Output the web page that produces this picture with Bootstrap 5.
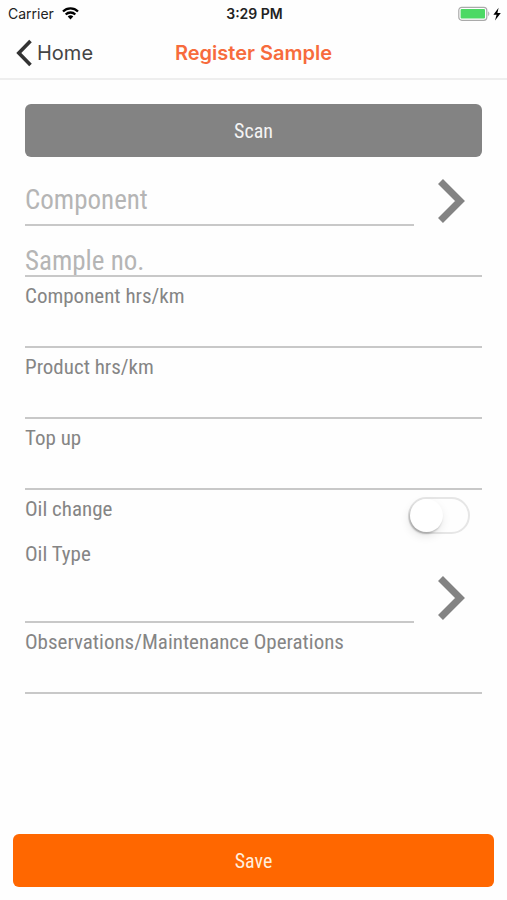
<!DOCTYPE html>
<html lang="en">
<head>
<meta charset="utf-8">
<meta name="viewport" content="width=device-width, initial-scale=1">
<title>Register Sample</title>
<link href="https://cdn.jsdelivr.net/npm/bootstrap@5.3.0/dist/css/bootstrap.min.css" rel="stylesheet">
<style>
  body { font-family: "Roboto Condensed", "Liberation Sans Narrow", Roboto, sans-serif; color: #858585; background: #fefefe; }
  .system-font { font-family: Inter, "Liberation Sans", sans-serif; }
  .status-bar { height: 27px; font-size: 14px; color: #222; padding: 0 6px 0 8px; }
  .side { flex: 1 1 0; }
  .title-bar { height: 53px; border-bottom: 2px solid #eee; padding: 0 16px; }
  .back-link { color: #444; font-size: 20px; }
  .page-title { color: #f76b3c; font-size: 20px; font-weight: 600; }
  .form-area { padding: 24px 25px 0; }
  .btn-block { height: 53px; border: 0; border-radius: 6px; font-size: 20px; color: #fff; }
  .btn-scan, .btn-scan:hover { background: #838383; color: #f4f4f4; }
  .btn-save, .btn-save:hover { background: #ff6700; color: #ffeedd; }
  .line-input { border: 0; border-bottom: 2px solid #c8c8c8; border-radius: 0; padding: 0; height: 37px; font-size: 27px; line-height: 30px; color: #858585; background: transparent; }
  .line-input:focus { box-shadow: none; border-color: #858585; background: transparent; }
  .line-input::placeholder { color: #b5b5b5; opacity: 1; }
  .input-tall { height: 50px; }
  .input-snug { height: 31px; }
  .component-row { padding-top: 19px; }
  .field-label { font-size: 21px; line-height: 30px; padding-top: 4px; }
  .pick-btn { width: 68px; height: 50px; padding: 0 0 0 8px; border: 0; }
  .oil-row { height: 45px; }
  .oil-switch.form-check-input { width: 62px; height: 37px; margin: 0; border: 2px solid #e6e6e6; background: #fefefe; box-shadow: none; appearance: none; border-radius: 19px; }
  .oil-switch::before { content: ""; display: block; width: 33px; height: 33px; border-radius: 50%; background: #fff; box-shadow: -1px 2px 2px rgba(0,0,0,.2), -1px 4px 10px rgba(0,0,0,.1); }
  .oil-switch:checked { background: #4cd964; }
  .oil-switch:checked::before { margin-left: auto; }
  .switch-cell { padding: 7px 12px 0 0; }
  .save-area { padding: 0 13px 13px; }
</style>
</head>
<body class="d-flex flex-column min-vh-100">
<header class="system-font">
  <div class="status-bar d-flex align-items-center">
    <div class="side d-flex align-items-center gap-2">
      <span>Carrier</span>
      <svg width="17" height="13" viewBox="0 0 17 13" fill="none" stroke="#000" stroke-width="2.3" role="img" aria-label="Wi-Fi"><path d="M1 4.5a10.8 10.8 0 0 1 15 0M3.7 7.5a6.8 6.8 0 0 1 9.6 0"/><path d="M8.5 12.5L5.7 9.6a4 4 0 0 1 5.6 0z" fill="#000" stroke="none"/></svg>
    </div>
    <span class="fw-semibold">3:29 PM</span>
    <div class="side d-flex align-items-center justify-content-end">
      <svg width="43" height="16" viewBox="0 0 43 16" role="img" aria-label="Battery charging"><rect x=".8" y="1.3" width="28" height="13" rx="3" fill="#fff" stroke="#aaa" stroke-width="1.2"/><rect x="2.6" y="3.1" width="24.4" height="9.4" rx="1" fill="#4cd964"/><path d="M30.2 5.3q2.4 2.5 0 5z" fill="#aaa"/><path d="M40.6 1.8L35.4 8.8h3.2L37 14.5l5.8-7.5h-3.4z" fill="#000"/></svg>
    </div>
  </div>
  <nav class="title-bar d-flex align-items-center" aria-label="Page">
    <div class="side d-flex"><a href="#" class="back-link d-flex align-items-center text-decoration-none"><svg class="me-1" width="17" height="28" viewBox="0 0 17 28" fill="none" stroke="#333" stroke-width="3.6" aria-hidden="true"><path d="M14.5 2L2.8 14l11.7 12"/></svg>Home</a></div>
    <h1 class="page-title m-0">Register Sample</h1>
    <div class="side"></div>
  </nav>
</header>
<form class="d-flex flex-column flex-grow-1">
  <div class="form-area">
    <button type="button" class="btn btn-block btn-scan w-100">Scan</button>
    <div class="component-row d-flex">
      <input class="form-control line-input input-tall" type="text" placeholder="Component" aria-label="Component">
      <button type="button" class="btn pick-btn flex-shrink-0" aria-label="Choose component"><svg width="30" height="46" viewBox="0 0 30 46" fill="none" stroke="#838383" stroke-width="7" aria-hidden="true"><path d="M3.5 3.5L23 23 3.5 42.5"/></svg></button>
    </div>
    <div class="pt-3 mt-1"><input class="form-control line-input input-snug" type="text" placeholder="Sample no." aria-label="Sample number"></div>
    <div>
      <label class="field-label d-block" for="component-hours">Component hrs/km</label>
      <input class="form-control line-input" type="text" id="component-hours">
    </div>
    <div>
      <label class="field-label d-block" for="product-hours">Product hrs/km</label>
      <input class="form-control line-input" type="text" id="product-hours">
    </div>
    <div>
      <label class="field-label d-block" for="top-up">Top up</label>
      <input class="form-control line-input" type="text" id="top-up">
    </div>
    <div class="oil-row d-flex justify-content-between align-items-start">
      <label class="field-label" for="oil-change">Oil change</label>
      <div class="switch-cell"><input class="form-check-input oil-switch d-block" type="checkbox" role="switch" id="oil-change"></div>
    </div>
    <div>
      <label class="field-label d-block" for="oil-type">Oil Type</label>
      <div class="d-flex pt-1">
        <input class="form-control line-input input-tall" type="text" id="oil-type">
        <button type="button" class="btn pick-btn flex-shrink-0" aria-label="Choose oil type"><svg width="30" height="46" viewBox="0 0 30 46" fill="none" stroke="#838383" stroke-width="7" aria-hidden="true"><path d="M3.5 3.5L23 23 3.5 42.5"/></svg></button>
      </div>
    </div>
    <div>
      <label class="field-label d-block" for="observations">Observations/Maintenance Operations</label>
      <input class="form-control line-input" type="text" id="observations">
    </div>
  </div>
  <div class="save-area mt-auto">
    <button type="submit" class="btn btn-block btn-save w-100">Save</button>
  </div>
</form>
<script src="https://cdn.jsdelivr.net/npm/bootstrap@5.3.0/dist/js/bootstrap.bundle.min.js"></script>
</body>
</html>
